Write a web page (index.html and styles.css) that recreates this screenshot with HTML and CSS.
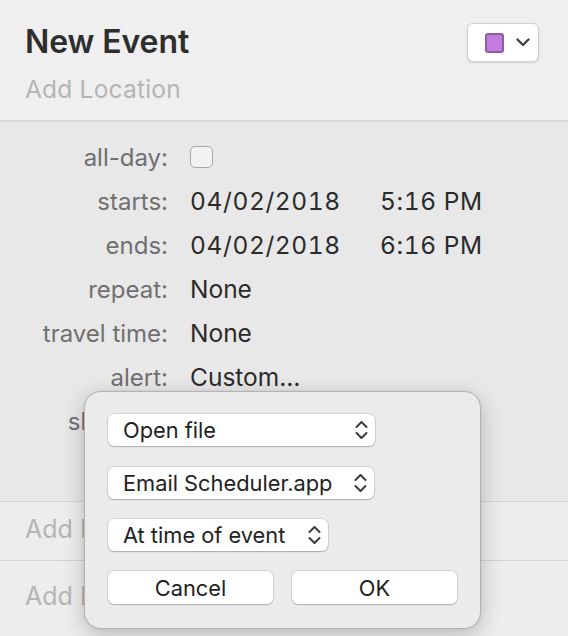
FILE: index.html
```html
<!DOCTYPE html>
<html>
<head>
<meta charset="utf-8">
<link rel="stylesheet" href="styles.css">
</head>
<body>
<div class="window">
  <header class="header">
    <div class="titles">
      <div class="title">New Event</div>
      <div class="location">Add Location</div>
    </div>
    <button class="color-btn">
      <span class="swatch"></span>
      <svg class="chev" width="14" height="9" viewBox="0 0 14 9"><polyline points="1.5,1.5 7,7 12.5,1.5" fill="none" stroke="#3a3a3a" stroke-width="2.2" stroke-linecap="round" stroke-linejoin="round"/></svg>
    </button>
  </header>
  <section class="details">
    <div class="label">all-day:</div><div class="value"><span class="checkbox"></span></div>
    <div class="label">starts:</div><div class="value dt"><span class="date">04/02/2018</span><span>5:16 PM</span></div>
    <div class="label">ends:</div><div class="value dt"><span class="date">04/02/2018</span><span>6:16 PM</span></div>
    <div class="label">repeat:</div><div class="value">None</div>
    <div class="label">travel time:</div><div class="value">None</div>
    <div class="label">alert:</div><div class="value">Custom…</div>
    <div class="label">show as:</div><div class="value">Busy</div>
  </section>
  <div class="extra first">Add Invitees</div>
  <div class="extra last">Add Notes</div>

  <div class="popover">
    <div class="select w1"><span>Open file</span>
      <svg class="updown" width="13" height="20" viewBox="0 0 13 20"><polyline points="1.5,7 6.5,2 11.5,7" fill="none" stroke="#3a3a3a" stroke-width="2" stroke-linecap="round" stroke-linejoin="round"/><polyline points="1.5,13 6.5,18 11.5,13" fill="none" stroke="#3a3a3a" stroke-width="2" stroke-linecap="round" stroke-linejoin="round"/></svg>
    </div>
    <div class="select w2"><span>Email Scheduler.app</span>
      <svg class="updown" width="13" height="20" viewBox="0 0 13 20"><polyline points="1.5,7 6.5,2 11.5,7" fill="none" stroke="#3a3a3a" stroke-width="2" stroke-linecap="round" stroke-linejoin="round"/><polyline points="1.5,13 6.5,18 11.5,13" fill="none" stroke="#3a3a3a" stroke-width="2" stroke-linecap="round" stroke-linejoin="round"/></svg>
    </div>
    <div class="select w3"><span>At time of event</span>
      <svg class="updown" width="13" height="20" viewBox="0 0 13 20"><polyline points="1.5,7 6.5,2 11.5,7" fill="none" stroke="#3a3a3a" stroke-width="2" stroke-linecap="round" stroke-linejoin="round"/><polyline points="1.5,13 6.5,18 11.5,13" fill="none" stroke="#3a3a3a" stroke-width="2" stroke-linecap="round" stroke-linejoin="round"/></svg>
    </div>
    <div class="buttons">
      <button class="btn">Cancel</button>
      <button class="btn">OK</button>
    </div>
  </div>
</div>
</body>
</html>
```

FILE: styles.css
```css
* { box-sizing: border-box; }
html, body { margin: 0; padding: 0; }
body {
  width: 568px;
  height: 636px;
  overflow: hidden;
  font-family: "Inter", "Noto Sans", sans-serif;
  background: #efefef;
}
.window { position: relative; width: 568px; height: 636px; }

.header {
  display: flex;
  justify-content: space-between;
  align-items: flex-start;
  height: 122px;
  padding: 23px 29px 0 25px;
  background: #efefef;
  border-bottom: 2px solid #d6d6d6;
}
.title {
  font-size: 32px;
  font-weight: 600;
  color: #2e2e2e;
  line-height: 38px;
  letter-spacing: -0.1px;
}
.location {
  margin-top: 13px;
  font-size: 24.5px;
  color: #b5b5b5;
  line-height: 30px;
  letter-spacing: 0.2px;
}
.color-btn {
  width: 72px;
  height: 39px;
  display: flex;
  align-items: center;
  gap: 12px;
  padding: 0 0 0 17px;
  background: #fff;
  border: 1px solid #cfcfcf;
  border-radius: 6px;
  box-shadow: 0 1px 2px rgba(0,0,0,0.12);
}
.swatch {
  width: 19px;
  height: 20px;
  border-radius: 3px;
  background: #c27cdb;
  border: 2px solid #8f5ba6;
}

.details {
  display: grid;
  grid-template-columns: 168px 1fr;
  column-gap: 22px;
  grid-auto-rows: 44px;
  align-items: center;
  padding: 13px 0 0 0;
  height: 380px;
  background: #e8e8e8;
  border-bottom: 1px solid #d3d3d3;
}
.label {
  text-align: right;
  font-size: 24px;
  color: #707070;
}
.value {
  font-size: 24.5px;
  color: #2b2b2b;
  display: flex;
  align-items: center;
}
.dt { font-feature-settings: "tnum" 1; letter-spacing: 0.6px; }
.dt .date { width: 190px; }
.checkbox {
  width: 23px;
  height: 22px;
  border-radius: 5px;
  border: 1.5px solid #a8a8a8;
  background: #f2f2f2;
}

.extra {
  font-size: 25px;
  line-height: 30px;
  color: #b5b5b5;
  background: #ededed;
}
.extra.first {
  height: 59px;
  padding: 12px 0 0 25px;
  border-bottom: 1px solid #d3d3d3;
}
.extra.last {
  height: 75px;
  padding: 20px 0 0 25px;
}

.popover {
  position: absolute;
  left: 84px;
  top: 391px;
  width: 397px;
  height: 238px;
  padding: 22px 0 0 23px;
  background: #ebebeb;
  border: 1px solid #b3b3b3;
  border-radius: 17px;
  box-shadow: 0 6px 22px rgba(0,0,0,0.22), 0 0 3px rgba(0,0,0,0.08);
  display: flex;
  flex-direction: column;
  gap: 20px;
}
.select {
  height: 32px;
  display: flex;
  align-items: center;
  justify-content: space-between;
  padding: 0 7px 0 15px;
  background: #fff;
  border-radius: 6px;
  box-shadow: 0 0 0 0.5px rgba(0,0,0,0.18), 0 1px 1.5px rgba(0,0,0,0.2);
  font-size: 21.8px;
  color: #222;
}
.w1 { width: 267px; margin-bottom: 1px; }
.w2 { width: 266px; }
.w3 { width: 220px; }
.buttons { display: flex; gap: 19px; }
.btn {
  width: 165px;
  height: 33px;
  background: #fff;
  border: none;
  border-radius: 6px;
  box-shadow: 0 0 0 0.5px rgba(0,0,0,0.18), 0 1px 1.5px rgba(0,0,0,0.2);
  font-family: "Inter", "Noto Sans", sans-serif;
  font-size: 21.8px;
  color: #222;
  padding: 0;
}
```
